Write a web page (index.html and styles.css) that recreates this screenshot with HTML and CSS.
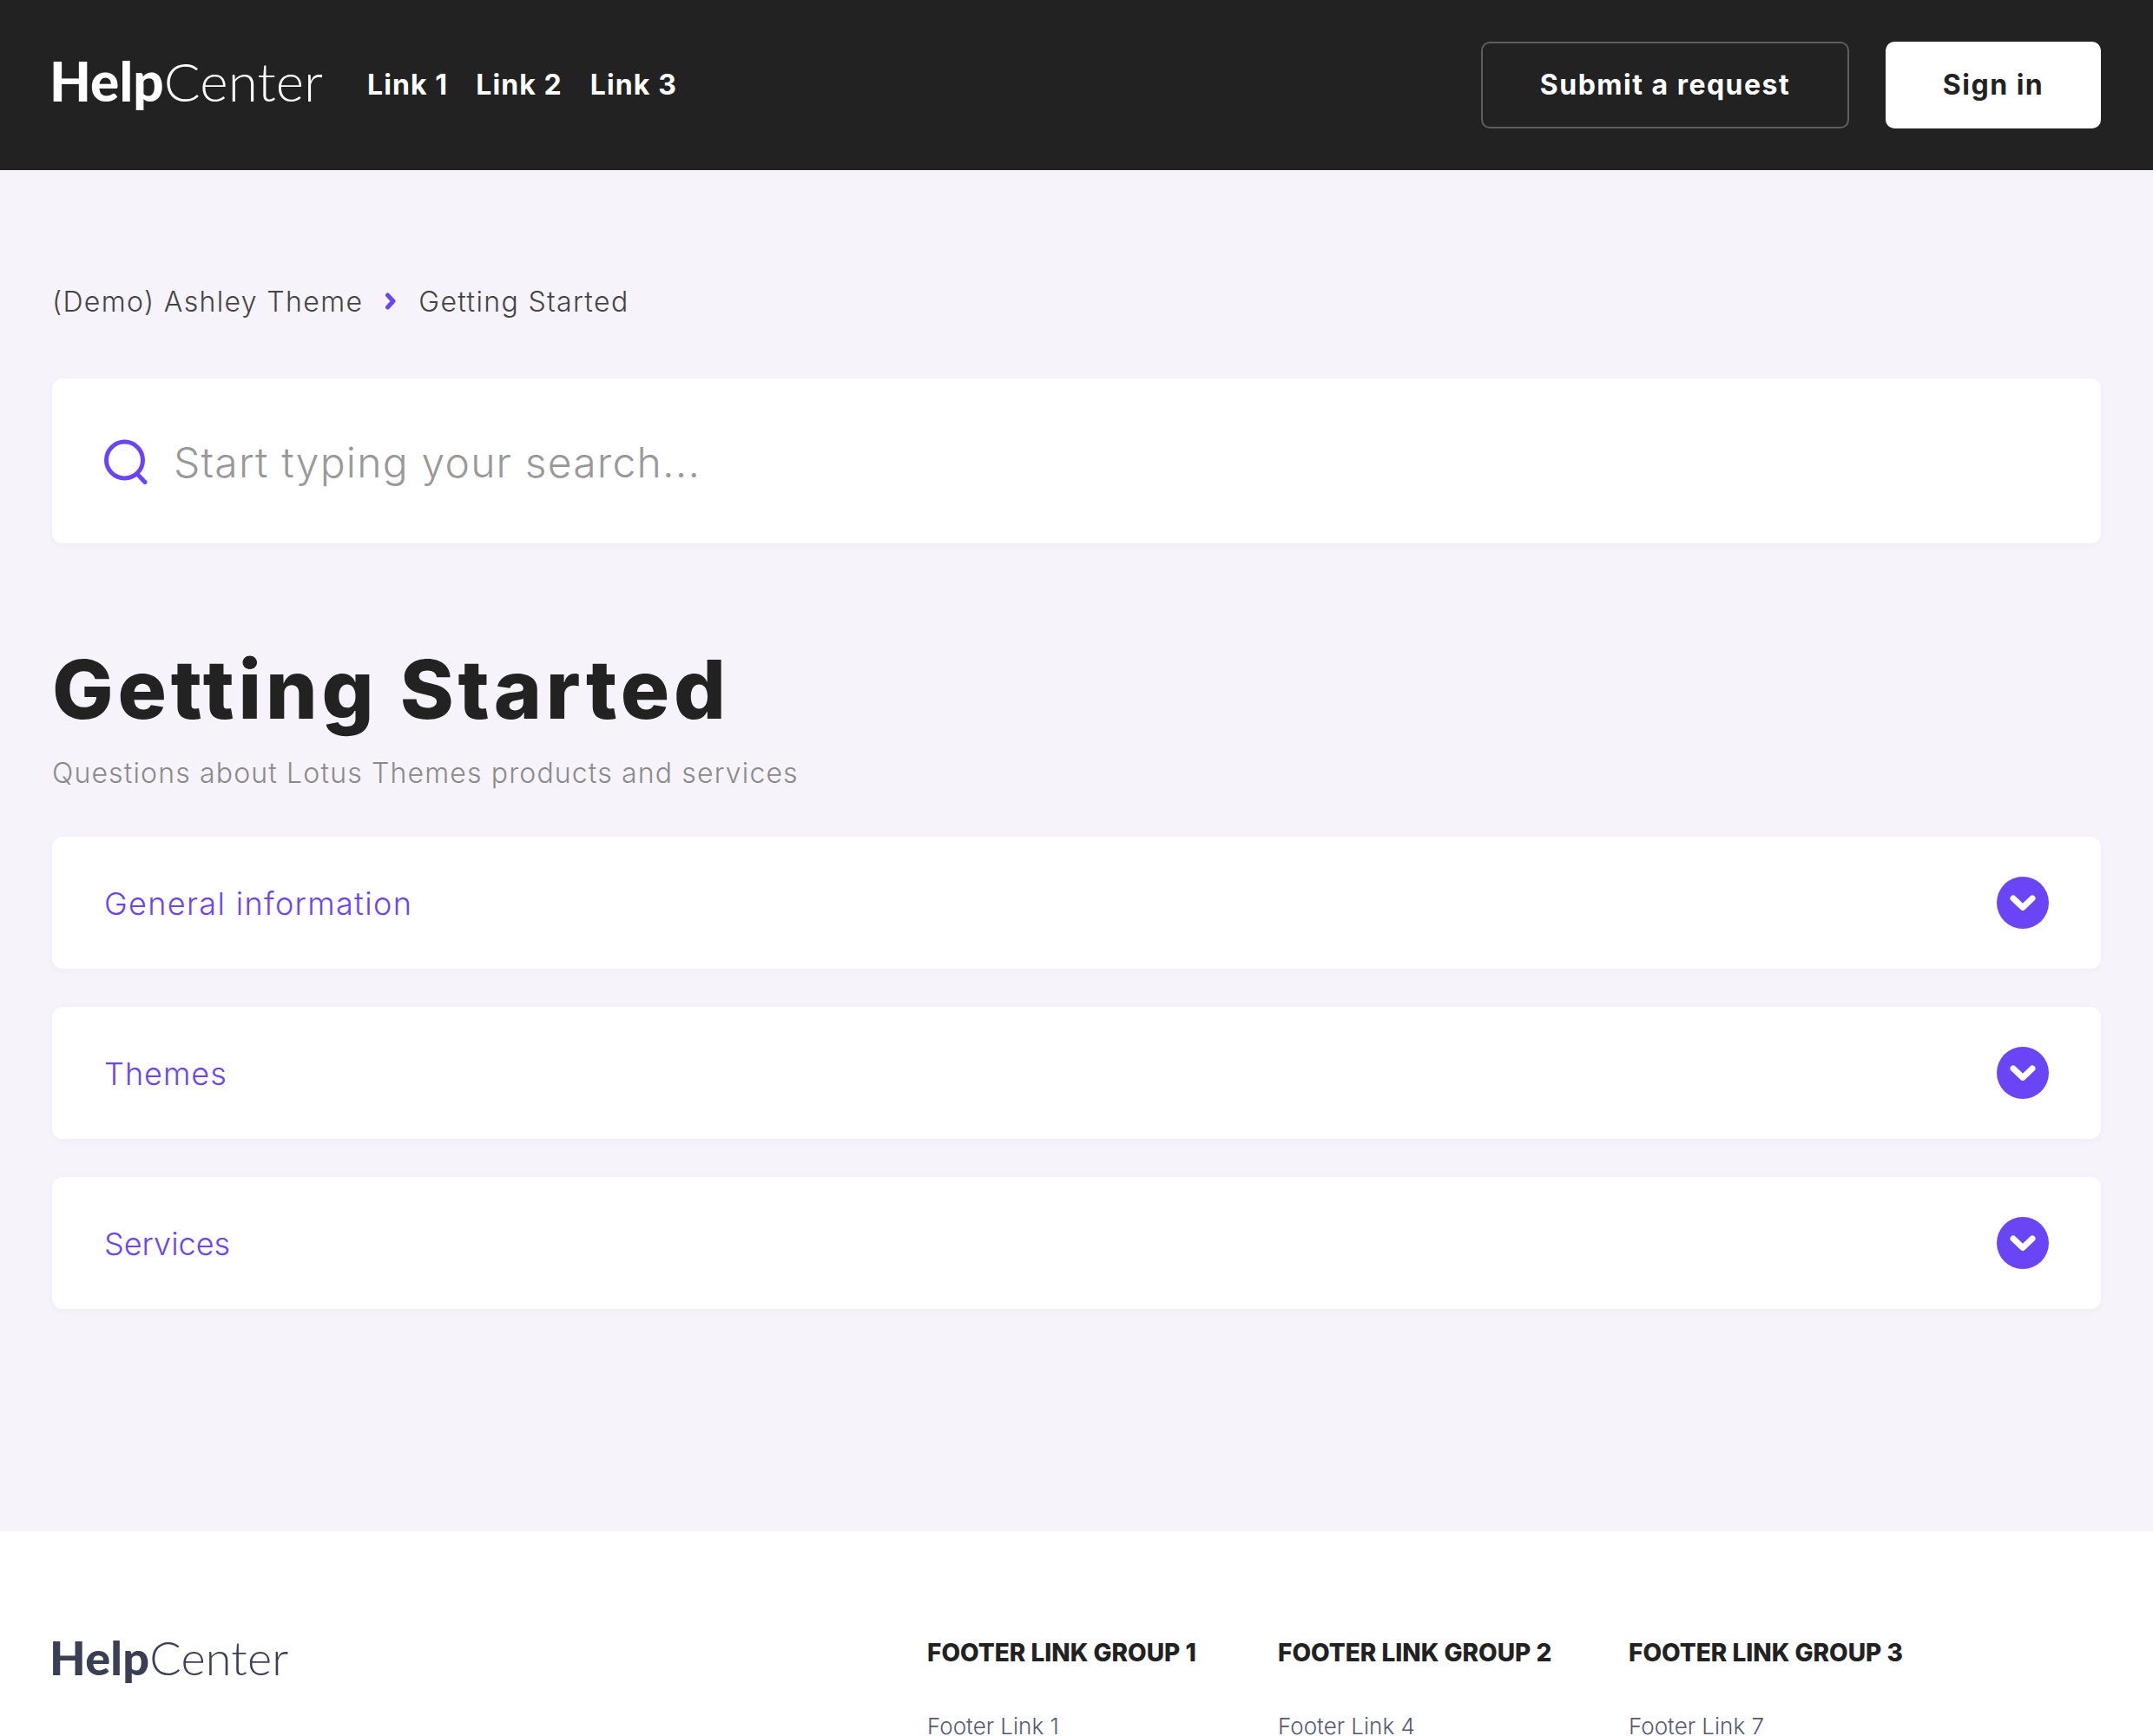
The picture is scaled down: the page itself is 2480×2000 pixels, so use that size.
FILE: index.html
```html
<!DOCTYPE html>
<html lang="en">
<head>
<meta charset="utf-8">
<title>Getting Started</title>
<link rel="stylesheet" href="styles.css">
</head>
<body>
<header class="topbar">
  <a class="logo logo-head"><b>Help</b><span>Center</span></a>
  <nav class="nav">
    <a class="nav-link nav-link-1">Link 1</a>
    <a class="nav-link">Link 2</a>
    <a class="nav-link">Link 3</a>
  </nav>
  <div class="actions">
    <a class="btn btn-outline">Submit a request</a>
    <a class="btn btn-solid">Sign in</a>
  </div>
</header>
<main class="main">
  <div class="crumbs">
    <a class="crumb crumb-first">(Demo) Ashley Theme</a>
    <svg class="crumb-sep" viewBox="0 0 14 20" aria-hidden="true"><path d="M3.500 3l6.500 7-6.500 7" fill="none" stroke="#6a45f6" stroke-width="5" stroke-linecap="round" stroke-linejoin="round"/></svg>
    <a class="crumb crumb-last">Getting Started</a>
  </div>
  <div class="search">
    <svg class="search-icon" viewBox="0 0 50 52" aria-hidden="true"><circle cx="23.500" cy="24" r="21" fill="none" stroke="#6a45f6" stroke-width="5"/><path d="M38 40l9 9.500" fill="none" stroke="#6a45f6" stroke-width="5" stroke-linecap="round"/></svg>
    <span class="search-text">Start typing your search...</span>
  </div>
  <h1 class="title">Getting Started</h1>
  <p class="subtitle">Questions about Lotus Themes products and services</p>
  <section class="cards">
    <a class="card"><span class="card-label label-general">General information</span><span class="toggle"><svg viewBox="0 0 60 60" aria-hidden="true"><path d="M19 25l11 10.500L41 25" fill="none" stroke="#fff" stroke-width="7" stroke-linecap="round" stroke-linejoin="round"/></svg></span></a>
    <a class="card"><span class="card-label label-themes">Themes</span><span class="toggle"><svg viewBox="0 0 60 60" aria-hidden="true"><path d="M19 25l11 10.500L41 25" fill="none" stroke="#fff" stroke-width="7" stroke-linecap="round" stroke-linejoin="round"/></svg></span></a>
    <a class="card"><span class="card-label label-services">Services</span><span class="toggle"><svg viewBox="0 0 60 60" aria-hidden="true"><path d="M19 25l11 10.500L41 25" fill="none" stroke="#fff" stroke-width="7" stroke-linecap="round" stroke-linejoin="round"/></svg></span></a>
  </section>
</main>
<footer class="footer">
  <a class="logo logo-foot"><b>Help</b><span>Center</span></a>
  <div class="foot-cols">
    <div class="foot-col"><h4 class="foot-head">FOOTER LINK GROUP 1</h4><a class="foot-link">Footer Link 1</a></div>
    <div class="foot-col"><h4 class="foot-head">FOOTER LINK GROUP 2</h4><a class="foot-link">Footer Link 4</a></div>
    <div class="foot-col"><h4 class="foot-head">FOOTER LINK GROUP 3</h4><a class="foot-link">Footer Link 7</a></div>
  </div>
</footer>
</body>
</html>
```
FILE: styles.css
```css
* { box-sizing: border-box; }
html, body { margin: 0; height: 2000px; overflow: hidden; }
body {
  display: flex;
  flex-direction: column;
  background: #f6f3fa;
  color: #222;
  font-family: Inter, "Liberation Sans", sans-serif;
}
.topbar {
  height: 196px;
  flex: none;
  background: #222;
  display: flex;
  align-items: center;
  padding: 0 60px 0 57px;
}
.logo { font-family: Lato, "Liberation Sans", sans-serif; display: block; }
.logo b { font-weight: 900; }
.logo span { font-weight: 300; }
.logo-head { color: #fff; font-size: 62px; line-height: 72px; letter-spacing: 0.1px; width: 366px; padding-bottom: 10px; height: 82px; }
.nav { display: flex; gap: 32px; }
.nav-link { color: #fff; font-size: 32px; font-weight: 700; line-height: 40px; letter-spacing: 1.1px; }
.actions { margin-left: auto; display: flex; gap: 42px; }
.btn {
  height: 100px;
  border-radius: 10px;
  display: flex;
  align-items: center;
  justify-content: center;
  padding-bottom: 2px;
  font-size: 32px;
  font-weight: 700;
  letter-spacing: 1.5px;
}
.btn-outline { width: 424px; color: #fff; border: 2px solid #5e5e5e; }
.btn-solid { width: 248px; color: #222; background: #fff; }
.main { flex: none; height: 1568px; padding: 127px 60px 0; }
.crumbs { height: 48px; display: flex; align-items: center; font-size: 32px; color: #444; font-weight: 300; letter-spacing: 1.35px; margin-bottom: 65px; }
.crumb-sep { width: 14px; height: 20px; margin: 0 25px; }
.search {
  height: 190px;
  background: #fff;
  border-radius: 12px;
  box-shadow: 0 2px 8px rgba(60, 40, 120, 0.04);
  display: flex;
  align-items: center;
  padding: 2px 60px 0;
}
.search-icon { width: 50px; height: 52px; margin-right: 30px; }
.search-text { font-size: 48px; font-weight: 300; color: #999; letter-spacing: 1.2px; }
.title { margin: 110px 0 0; font-size: 94px; line-height: 116px; font-weight: 800; letter-spacing: 4.8px; color: #222; }
.subtitle { margin: 15px 0 49px; font-size: 32px; line-height: 48px; font-weight: 300; letter-spacing: 1.15px; color: #8a8a8a; }
.cards { display: flex; flex-direction: column; gap: 44px; }
.card {
  height: 152px;
  background: #fff;
  border-radius: 12px;
  box-shadow: 0 2px 8px rgba(60, 40, 120, 0.04);
  display: flex;
  align-items: center;
  justify-content: space-between;
  padding: 0 60px;
}
.card-label { font-size: 36px; font-weight: 300; color: #6a45f6; padding-top: 2px; }
.label-general { letter-spacing: 1.35px; }
.label-themes { letter-spacing: 1px; }
.label-services { letter-spacing: 0; }
.toggle { width: 60px; height: 60px; border-radius: 50%; background: #6a45f6; display: block; }
.toggle svg { display: block; width: 60px; height: 60px; }
.footer { flex: 1; background: #fff; display: flex; padding: 120px 60px 0 57px; }
.logo-foot { color: #3a3f54; font-size: 54px; line-height: 64px; letter-spacing: 0.2px; width: 1011px; margin-top: -6px; }
.foot-cols { display: flex; }
.foot-col { width: 404px; }
.foot-head { margin: 0 0 47px; font-size: 28px; line-height: 40px; font-weight: 800; color: #222; }
.foot-link { display: block; font-size: 26px; line-height: 36px; font-weight: 300; color: #555a70; }
```
